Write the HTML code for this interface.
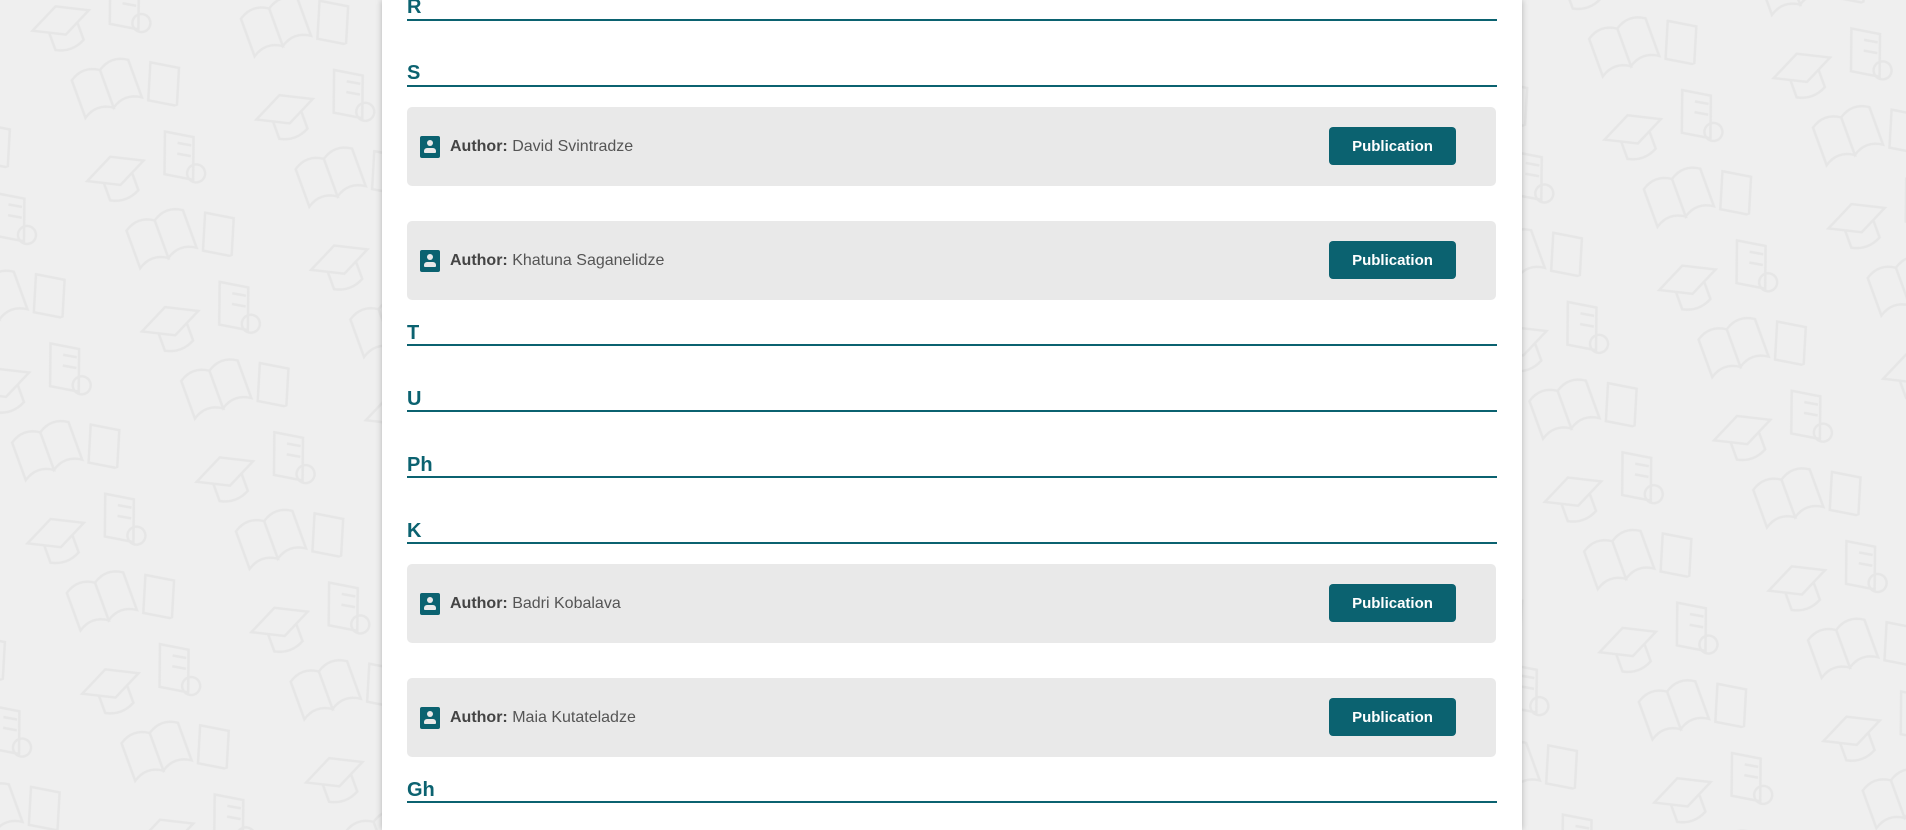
<!DOCTYPE html>
<html><head><meta charset="utf-8"><style>
body{margin:0;width:1906px;height:830px;overflow:hidden;background:#efefef;font-family:"Liberation Sans",sans-serif;position:relative}
.bg{position:absolute;inset:0}
.panel{position:absolute;left:382px;top:0;width:1140px;height:830px;background:#fff;box-shadow:0 0 6px rgba(0,0,0,.25)}
.h{position:absolute;left:25px;width:1090px;height:2px;background:#0b6270}
.ht{position:absolute;left:25px;font-size:20px;font-weight:bold;color:#0b6270;line-height:20px}
.card{position:absolute;left:25px;width:1089px;height:79px;background:#e9e9e9;border-radius:5px}
.ic{position:absolute;left:13px;top:29px;width:20px;height:22px;background:#0b6270;border-radius:2px}
.ic:before{content:"";position:absolute;left:7px;top:4px;width:6px;height:6px;border-radius:50%;background:#e9e9e9}
.ic:after{content:"";position:absolute;left:4px;top:12px;width:12px;height:5px;border-radius:3px 3px 1px 1px;background:#e9e9e9}
.tx{position:absolute;left:43px;top:31px;font-size:16px;color:#555;line-height:18px}
.tx b{color:#444}
.btn{position:absolute;left:922px;top:20px;width:127px;height:38px;background:#0b6270;border-radius:4px;color:#fff;font-size:15px;font-weight:bold;text-align:center;line-height:40px}
</style></head><body>
<svg class="bg" width="1906" height="830" xmlns="http://www.w3.org/2000/svg">
<defs><pattern id="p" width="180" height="160" patternUnits="userSpaceOnUse" patternTransform="rotate(-20)">
<g fill="none" stroke="#e6e6e6" stroke-width="2.5">
<path d="M20 40 l30 -15 l30 15 l-30 15z M35 48 v18 q15 8 30 0 v-18"/>
<path d="M110 20 l25 15 l-15 40 l-25 -15z M118 35 l12 7 M114 45 l12 7"/>
<circle cx="125" cy="70" r="9"/>
<path d="M40 100 q15 -10 30 0 v40 q-15 -10 -30 0z M70 100 q15 -10 30 0 v40 q-15 -10 -30 0z"/>
<path d="M120 110 l25 15 l-15 35 l-25 -15z"/>
</g></pattern></defs>
<rect width="1906" height="830" fill="url(#p)"/>
</svg>
<div class="panel">
<div class="ht" style="top:-3px">R</div><div class="h" style="top:19px"></div>
<div class="ht" style="top:63px">S</div><div class="h" style="top:85px"></div>
<div class="card" style="top:107px"><div class="ic"></div><div class="tx"><b>Author:</b> David Svintradze</div><div class="btn">Publication</div></div>
<div class="card" style="top:221px"><div class="ic"></div><div class="tx"><b>Author:</b> Khatuna Saganelidze</div><div class="btn">Publication</div></div>
<div class="ht" style="top:323px">T</div><div class="h" style="top:344px"></div>
<div class="ht" style="top:389px">U</div><div class="h" style="top:410px"></div>
<div class="ht" style="top:455px">Ph</div><div class="h" style="top:476px"></div>
<div class="ht" style="top:521px">K</div><div class="h" style="top:542px"></div>
<div class="card" style="top:564px"><div class="ic"></div><div class="tx"><b>Author:</b> Badri Kobalava</div><div class="btn">Publication</div></div>
<div class="card" style="top:678px"><div class="ic"></div><div class="tx"><b>Author:</b> Maia Kutateladze</div><div class="btn">Publication</div></div>
<div class="ht" style="top:780px">Gh</div><div class="h" style="top:801px"></div>
</div>
</body></html>
